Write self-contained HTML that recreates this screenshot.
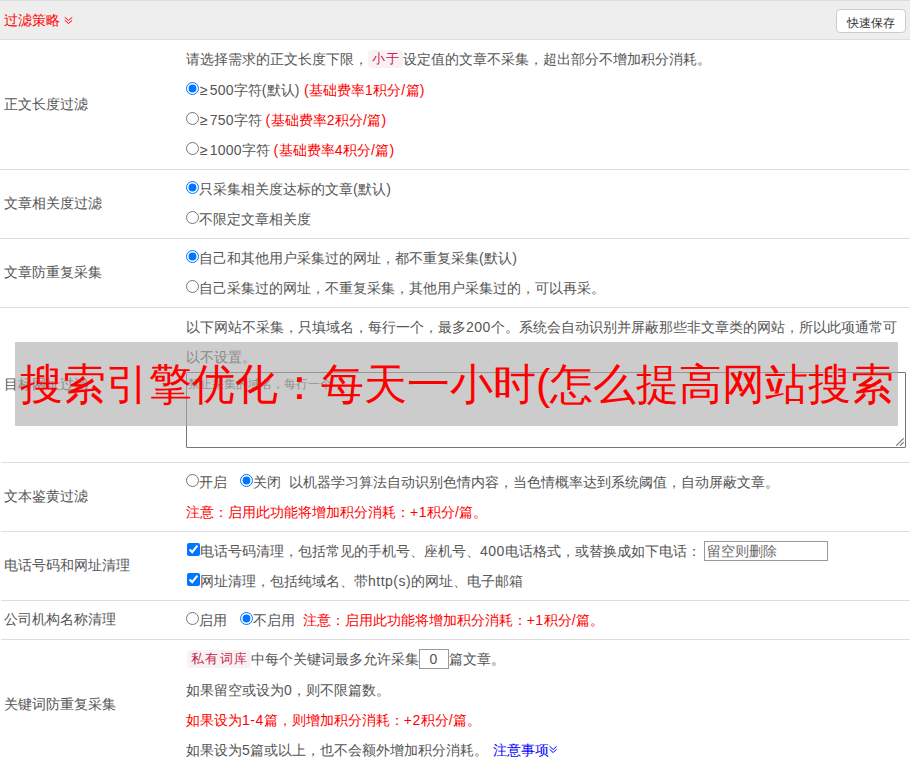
<!DOCTYPE html>
<html><head><meta charset="utf-8">
<style>
html,body{margin:0;padding:0;background:#fff;}
body{font-family:"Liberation Sans",sans-serif;font-size:14px;color:#555;width:912px;height:768px;overflow:hidden;position:relative;}
.wrap{position:absolute;left:0;top:0;width:910px;border-top:1px solid #ddd;}
.hd{height:38px;background:#eee;border-bottom:1px solid #ddd;position:relative;}
.hd .t{position:absolute;left:3.5px;top:0;line-height:38px;color:#f00;font-size:14px;}
.hd .t svg{position:absolute;left:60.5px;top:13.5px;}
.btn{position:absolute;left:836px;top:8px;width:70px;height:24px;box-sizing:border-box;border:1px solid #ccc;border-radius:4px;background:#fff;font-size:12px;color:#333;text-align:center;line-height:27px;}
.row{position:relative;border-bottom:1px solid #ddd;box-sizing:border-box;}
.row.b1{border-bottom-color:transparent;}
.row.b1::after{content:"";position:absolute;left:1px;right:0;bottom:-1px;height:1px;background:#ddd;}
.lab{position:absolute;left:4px;top:0;bottom:0;display:flex;align-items:center;}
.ct{margin-left:186px;padding:4px 0;}
.ln{height:30px;line-height:30px;white-space:nowrap;position:relative;}
.ln.l31{height:31px;line-height:31px;}
.lt{letter-spacing:0.5px;}
.ge{padding-left:1px;letter-spacing:2px;}
.dg{letter-spacing:0.2px;}
.red{color:#f00;}
.blue{color:#00f;}
code{font-family:"Liberation Sans",sans-serif;font-size:12.6px;letter-spacing:1.4px;color:#c7254e;background:#f9f2f4;border-radius:4px;padding:2px 2px 2px 4px;position:relative;top:-1px;}
.rd,.cb{width:13px;height:13px;margin:0;vertical-align:0px;}
.cb{margin-left:1px;}
.ipt{display:inline-block;box-sizing:border-box;border:1px solid #999;height:20px;vertical-align:middle;line-height:18px;color:#6a6a6a;position:relative;top:-1px;}
.ta{position:absolute;left:186px;top:372px;width:720px;height:76px;box-sizing:border-box;border:1px solid #767676;border-radius:1px;background:#fff;}
.ta .ph{position:absolute;left:1px;top:3px;line-height:16px;font-size:12px;color:#6a6a6a;}
.band{position:absolute;left:15px;top:342px;width:883px;height:84px;background:rgba(170,170,170,0.6);}
.big{position:absolute;left:20px;top:342px;height:84px;line-height:84px;font-size:43px;color:#f00;white-space:nowrap;}
</style></head><body>
<div class="wrap">
 <div class="hd">
  <div class="t">过滤策略<svg width="10" height="10" viewBox="0 0 10 10"><path d="M0.8 2.3 L4.5 5.5 L8.2 2.3 M0.8 5.3 L4.5 8.5 L8.2 5.3" fill="none" stroke="#f00" stroke-width="1"/></svg></div>
  <div class="btn">快速保存</div>
 </div>
 <div class="row" style="height:130px">
  <div class="lab">正文长度过滤</div>
  <div class="ct">
   <div class="ln l31">请选择需求的正文长度下限，<code>小于</code>设定值的文章不采集，超出部分不增加积分消耗。</div>
   <div class="ln"><input type="radio" checked class="rd"><span class="ge">≥</span><span class="dg">500</span>字符<span class="lt">(</span>默认<span class="lt">)</span> <span class="red"><span class="lt">(</span>基础费率<span class="lt">1</span>积分<span class="lt">/</span>篇<span class="lt">)</span></span></div>
   <div class="ln"><input type="radio" class="rd"><span class="ge">≥</span><span class="dg">750</span>字符 <span class="red"><span class="lt">(</span>基础费率<span class="lt">2</span>积分<span class="lt">/</span>篇<span class="lt">)</span></span></div>
   <div class="ln"><input type="radio" class="rd"><span class="ge">≥</span><span class="dg">1000</span>字符 <span class="red"><span class="lt">(</span>基础费率<span class="lt">4</span>积分<span class="lt">/</span>篇<span class="lt">)</span></span></div>
  </div>
 </div>
 <div class="row" style="height:69px">
  <div class="lab">文章相关度过滤</div>
  <div class="ct">
   <div class="ln"><input type="radio" checked class="rd">只采集相关度达标的文章<span class="lt">(</span>默认<span class="lt">)</span></div>
   <div class="ln"><input type="radio" class="rd">不限定文章相关度</div>
  </div>
 </div>
 <div class="row" style="height:69px">
  <div class="lab">文章防重复采集</div>
  <div class="ct">
   <div class="ln"><input type="radio" checked class="rd">自己和其他用户采集过的网址，都不重复采集<span class="lt">(</span>默认<span class="lt">)</span></div>
   <div class="ln"><input type="radio" class="rd">自己采集过的网址，不重复采集，其他用户采集过的，可以再采。</div>
  </div>
 </div>
 <div class="row b1" style="height:155px">
  <div class="lab">目标网址过滤</div>
  <div class="ct">
   <div class="ln">以下网站不采集，只填域名，每行一个，最多<span class="lt">200</span>个。系统会自动识别并屏蔽那些非文章类的网站，所以此项通常可</div>
   <div class="ln">以不设置。</div>
  </div>
 </div>
 <div class="row b1" style="height:69px">
  <div class="lab">文本鉴黄过滤</div>
  <div class="ct">
   <div class="ln"><input type="radio" class="rd">开启 <input type="radio" checked class="rd" style="margin-left:9px">关闭 &nbsp;以机器学习算法自动识别色情内容，当色情概率达到系统阈值，自动屏蔽文章。</div>
   <div class="ln red">注意：启用此功能将增加积分消耗：<span class="lt">+1</span>积分<span class="lt">/</span>篇。</div>
  </div>
 </div>
 <div class="row b1" style="height:69px">
  <div class="lab">电话号码和网址清理</div>
  <div class="ct">
   <div class="ln"><input type="checkbox" checked class="cb">电话号码清理，包括常见的手机号、座机号、<span class="lt">400</span>电话格式，或替换成如下电话：<span class="ipt" style="width:124px;margin-left:3px;padding-left:2px">留空则删除</span></div>
   <div class="ln"><input type="checkbox" checked class="cb">网址清理，包括纯域名、带<span class="lt">http(s)</span>的网址、电子邮箱</div>
  </div>
 </div>
 <div class="row b1" style="height:39px">
  <div class="lab">公司机构名称清理</div>
  <div class="ct">
   <div class="ln"><input type="radio" class="rd">启用 <input type="radio" checked class="rd" style="margin-left:9px">不启用 &nbsp;<span class="red">注意：启用此功能将增加积分消耗：<span class="lt">+1</span>积分<span class="lt">/</span>篇。</span></div>
  </div>
 </div>
 <div class="row" style="height:130px">
  <div class="lab">关键词防重复采集</div>
  <div class="ct">
   <div class="ln l31"><code style="margin-left:1px">私有词库</code>中每个关键词最多允许采集<span class="ipt" style="width:30px;text-align:center;color:#555"><span class="lt">0</span></span>篇文章。</div>
   <div class="ln">如果留空或设为<span class="lt">0</span>，则不限篇数。</div>
   <div class="ln red">如果设为<span class="lt">1-4</span>篇，则增加积分消耗：<span class="lt">+2</span>积分<span class="lt">/</span>篇。</div>
   <div class="ln">如果设为<span class="lt">5</span>篇或以上，也不会额外增加积分消耗。 <span class="blue" style="margin-left:1px">注意事项<svg width="10" height="10" viewBox="0 0 10 10" style="vertical-align:1px;margin-left:0px"><path d="M0.6 2.3 L4.1 5.5 L7.6 2.3 M0.6 5.3 L4.1 8.5 L7.6 5.3" fill="none" stroke="#00f" stroke-width="1"/></svg></span></div>
  </div>
 </div>
</div>
<div class="ta"><span class="ph">禁止采集的域名，每行一个</span><svg width="10" height="10" viewBox="0 0 10 10" style="position:absolute;right:0;bottom:0"><path d="M1.6 8.4 L8.4 1.6 M5.4 8.4 L8.4 5.4" stroke="#707070" stroke-width="1.1" stroke-linecap="round"/></svg></div>
<div class="band"></div>
<div class="big">搜索引擎优化：每天一小时(怎么提高网站搜索</div>
</body></html>
